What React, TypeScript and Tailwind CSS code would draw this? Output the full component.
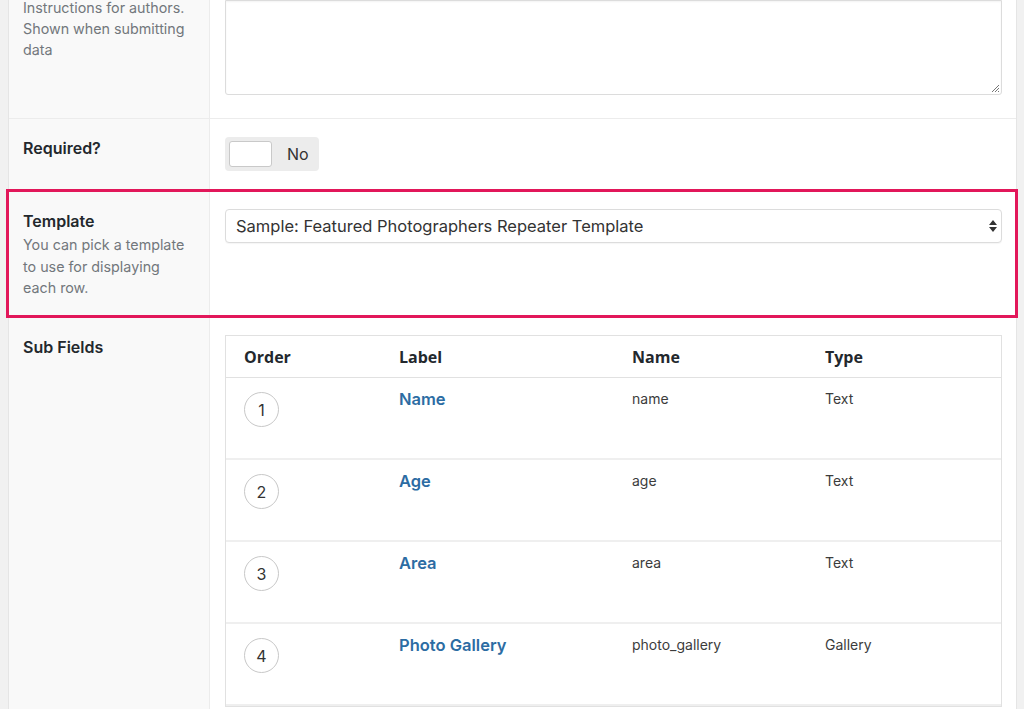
import React from 'react'

const rows = [
  { order: 1, label: 'Name', name: 'name', type: 'Text' },
  { order: 2, label: 'Age', name: 'age', type: 'Text' },
  { order: 3, label: 'Area', name: 'area', type: 'Text' },
  { order: 4, label: 'Photo Gallery', name: 'photo_gallery', type: 'Gallery' },
]

const SubFieldsTable: React.FC = () => {
  return (
    <div className="border border-[#e1e1e1] bg-white">
      {/* 헤더 */}
      <div className="grid h-[42px] grid-cols-[155px_232px_193px_1fr] items-center border-b border-[#e1e1e1] font-['Open_Sans',sans-serif] text-[16px] font-bold text-[#23282d]">
        <div className="pl-[18px]">Order</div>
        <div className="pl-[18px]">Label</div>
        <div className="pl-[19px]">Name</div>
        <div className="pl-[19px]">Type</div>
      </div>
      {rows.map((r) => (
        <div
          key={r.order}
          className="grid h-[82px] grid-cols-[155px_232px_193px_1fr] border-b-2 border-[#efefef] text-[14px] leading-[22px] text-[#3c3c3c]"
        >
          <div className="pl-[18px] pt-[14px]">
            <div className="flex h-[35px] w-[35px] items-center justify-center rounded-full border border-[#c8c8c8] text-[16px] text-[#333]">
              {r.order}
            </div>
          </div>
          <div className="pl-[18px] pt-[10px] text-[16.5px] font-semibold text-[#2c6ca3]">{r.label}</div>
          <div className="pl-[19px] pt-[10px]">{r.name}</div>
          <div className="pl-[19px] pt-[10px]">{r.type}</div>
        </div>
      ))}
    </div>
  )
}

export default function App() {
  return (
    <div className="h-[709px] overflow-hidden bg-[#f1f1f1] pl-[8px] pr-[7px] font-['Inter',sans-serif]">
      <div className="border-x border-[#e5e5e5] bg-white">
        {/* 작성자 안내 */}
        <div className="flex h-[119px] border-b border-[#ececec]">
          <div className="w-[201px] shrink-0 border-r border-[#ececec] bg-[#f9f9f9] px-[14px]">
            <p className="-mt-[3px] text-[14.3px] leading-[21px] text-[#72777c]">
              Instructions for authors.
              <br />
              Shown when submitting
              <br />
              data
            </p>
          </div>
          <div className="flex flex-1 flex-col justify-end pb-[23px] pl-[15px] pr-[14px]">
            <div className="relative h-[140px] rounded-b-[3px] border border-[#dcdcdc] bg-white shadow-[inset_0_1px_2px_rgba(0,0,0,0.05)]">
              <svg className="absolute bottom-[1px] right-[1px]" width="9" height="9" viewBox="0 0 9 9">
                <path d="M8 1 L1 8 M8 4 L4 8 M8 7 L7 8" stroke="#777" strokeWidth="1" />
              </svg>
            </div>
          </div>
        </div>

        {/* 필수 여부 */}
        <div className="flex h-[71px] border-b border-[#ececec]">
          <div className="w-[201px] shrink-0 border-r border-[#ececec] bg-[#f9f9f9] px-[14px] pt-[19px]">
            <div className="text-[16px] font-semibold leading-[20px] text-[#23282d]">Required?</div>
          </div>
          <div className="flex-1 pl-[15px] pr-[14px] pt-[18px]">
            <div className="flex h-[34px] w-[94px] items-center rounded-[4px] bg-[#ececec] pl-[4px]">
              <div className="h-[26px] w-[43px] rounded-[3px] border border-[#c9c9c9] bg-white" />
              <span className="ml-[15px] text-[16px] text-[#333]">No</span>
            </div>
          </div>
        </div>

        {/* 템플릿 */}
        <div className="relative flex h-[128px] border-b border-[#ececec]">
          <div className="w-[201px] shrink-0 border-r border-[#ececec] bg-[#f9f9f9] px-[14px] pt-[21px]">
            <div className="text-[16px] font-semibold leading-[20px] text-[#23282d]">Template</div>
            <p className="mt-[3px] text-[14.3px] leading-[21.5px] text-[#72777c]">
              You can pick a template
              <br />
              to use for displaying
              <br />
              each row.
            </p>
          </div>
          <div className="flex-1 pl-[15px] pr-[14px] pt-[19px]">
            <div className="flex h-[34px] items-center justify-between rounded-[4px] border border-[#dcdcdc] bg-white pl-[10px] pr-[3px] shadow-[0_1px_1px_rgba(0,0,0,0.04)]">
              <span className="text-[16.5px] text-[#333]">Sample: Featured Photographers Repeater Template</span>
              <svg width="10" height="14" viewBox="0 0 10 14">
                <path d="M5 1 L9 6 H1 Z M5 13 L9 8 H1 Z" fill="#333" />
              </svg>
            </div>
          </div>
          <div className="pointer-events-none absolute -bottom-[1px] -left-[3px] -right-[2px] -top-[1px] border-[3px] border-[#e2175a]" />
        </div>

        {/* 하위 필드 */}
        <div className="flex h-[420px]">
          <div className="w-[201px] shrink-0 border-r border-[#ececec] bg-[#f9f9f9] px-[14px] pt-[19px]">
            <div className="text-[16px] font-semibold leading-[20px] text-[#23282d]">Sub Fields</div>
          </div>
          <div className="flex-1 pl-[15px] pr-[14px] pt-[17px]">
            <SubFieldsTable />
          </div>
        </div>
      </div>
    </div>
  )
}
